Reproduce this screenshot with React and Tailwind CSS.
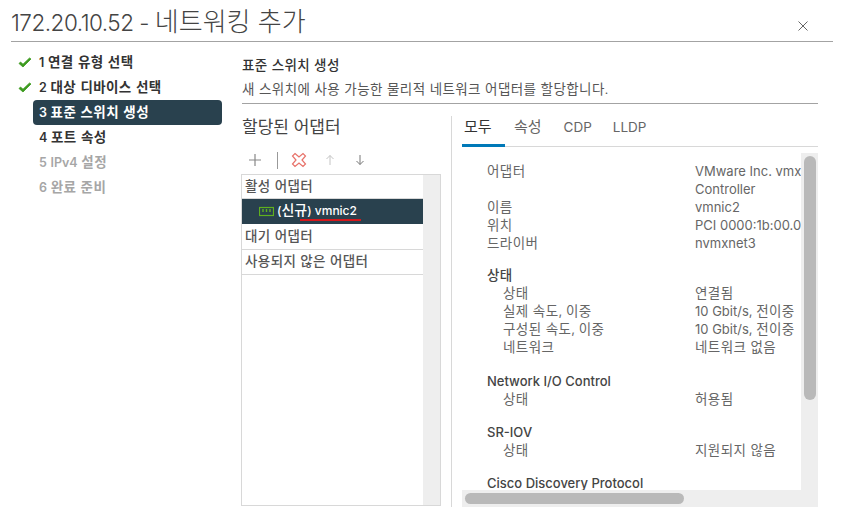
import React from "react";

const font = { fontFamily: '"Inter","Noto Sans CJK KR",sans-serif' };

function T({ children }) {
  if (!children) return null;
  const parts = String(children).split(/([\uAC00-\uD7A3]+(?: [\uAC00-\uD7A3]+)*)/);
  return (
    <>
      {parts.map((p, i) =>
        i % 2 === 1 ? (
          <span key={i} className="text-[13.5px] tracking-[0.4px]">{p}</span>
        ) : (
          <span key={i}>{p}</span>
        )
      )}
    </>
  );
}

function Check() {
  return (
    <svg width="14" height="12" viewBox="0 0 14 12" className="shrink-0">
      <path d="M1 6.5 L5 10 L13 2 L11.5 1 L5 7.2 L2.5 5 Z" fill="#3c9a1e" stroke="#3c9a1e" strokeWidth="0.8" />
    </svg>
  );
}

function Step({ n, state, check }) {
  const cls =
    state === "active"
      ? "bg-[#29414e] text-white rounded-[4px]"
      : state === "off"
      ? "text-[#a6a6a6]"
      : "text-[#333333]";
  return (
    <div className="flex items-center h-[25px]">
      <div className="w-[33px] pl-[18px] flex items-center shrink-0">{check && <Check />}</div>
      <div className={`w-[189px] h-[25px] pl-[6px] flex items-center text-[12.5px] font-semibold whitespace-nowrap ${cls}`}>
        <div className="[word-spacing:0.5px]"><T>{n}</T></div>
      </div>
    </div>
  );
}

function Row({ label, value, value2, indent, bold }) {
  return (
    <div className="flex text-[13px] leading-[18px] text-[#666666] whitespace-nowrap">
      <div className={`w-[208px] shrink-0 ${indent ? "pl-[16px]" : ""} ${bold ? "font-medium text-[#444444]" : ""}`}><T>{label}</T></div>
      {value && (
        <div>
          <T>{value}</T>
          {value2 && <div><T>{value2}</T></div>}
        </div>
      )}
    </div>
  );
}

function ListRow({ children, h }) {
  return (
    <div className={`${h} pl-[3px] flex items-center border-b border-[#d8d8d8] text-[12px] font-medium text-[#565656] whitespace-nowrap`}>
      <div><T>{children}</T></div>
    </div>
  );
}

export default function App() {
  return (
    <div className="w-[848px] h-[508px] bg-white overflow-hidden flex flex-col" style={font}>
      <div className="h-[42px] ml-[11px] w-[822px] border-b border-[#a3a3a3] flex items-start justify-between shrink-0">
        <div className="text-[22.5px] tracking-[-0.5px] leading-[28px] mt-[8px] text-[#444444] font-light whitespace-nowrap">
          172.20.10.52 - <span className="text-[26px] tracking-normal">네트워킹 추가</span>
        </div>
        <svg width="12" height="12" viewBox="0 0 12 12" className="mt-[20px] mr-[24px]">
          <path d="M1.5 1.5 L10.5 10.5 M10.5 1.5 L1.5 10.5" stroke="#666666" strokeWidth="1" />
        </svg>
      </div>
      <div className="flex flex-1 min-h-0">
        <div className="w-[242px] shrink-0 pt-[8px]">
          <Step n="1 연결 유형 선택" check />
          <Step n="2 대상 디바이스 선택" check />
          <Step n="3 표준 스위치 생성" state="active" />
          <Step n="4 포트 속성" />
          <Step n="5 IPv4 설정" state="off" />
          <Step n="6 완료 준비" state="off" />
        </div>
        <div className="w-[576px] flex flex-col min-h-0">
          <div className="h-[62px] border-b border-[#a3a3a3] shrink-0 pt-[14px] whitespace-nowrap">
            <div className="text-[12px] leading-[18px] font-medium text-[#333333]"><T>표준 스위치 생성</T></div>
            <div className="text-[12px] leading-[18px] mt-[5px] text-[#565656]"><T>새 스위치에 사용 가능한 물리적 네트워크 어댑터를 할당합니다.</T></div>
          </div>
          <div className="flex flex-1 min-h-0">
            <div className="w-[209px] shrink-0 -ml-[1px] flex flex-col">
              <div className="text-[17px] leading-[22px] mt-[12px] ml-[1px] text-[#444444]">할당된 어댑터</div>
              <div className="h-[36px] flex items-center pt-[8px] shrink-0">
                <svg width="14" height="14" viewBox="0 0 14 14" className="ml-[7px]">
                  <path d="M7 1 V13 M1 7 H13" stroke="#888888" strokeWidth="1.2" />
                </svg>
                <div className="w-px h-[17px] bg-[#999999] ml-[15px]" />
                <svg width="16" height="16" viewBox="0 0 16 16" className="ml-[13px]">
                  <path d="M4 1.5 L8 5 L12 1.5 L14.5 4 L11 8 L14.5 12 L12 14.5 L8 11 L4 14.5 L1.5 12 L5 8 L1.5 4 Z" fill="none" stroke="#e8726a" strokeWidth="1.2" />
                </svg>
                <svg width="10" height="12" viewBox="0 0 10 12" className="ml-[18px]">
                  <path d="M5 11 V1.5 M1.5 5 L5 1.5 L8.5 5" fill="none" stroke="#c4c4c4" strokeWidth="1" />
                </svg>
                <svg width="10" height="12" viewBox="0 0 10 12" className="ml-[20px]">
                  <path d="M5 1 V10.5 M1.5 7 L5 10.5 L8.5 7" fill="none" stroke="#777777" strokeWidth="1" />
                </svg>
              </div>
              <div className="w-[200px] h-[332px] border border-[#d8d8d8] flex">
                <div className="w-[181px] shrink-0">
                  <ListRow h="h-[24px]">활성 어댑터</ListRow>
                  <div className="h-[25px] bg-[#29414e] flex items-center pl-[17px] relative">
                    <svg width="15" height="11" viewBox="0 0 15 11" className="shrink-0">
                      <rect x="0.5" y="1.5" width="14" height="8" fill="none" stroke="#5fb01e" strokeWidth="1.2" />
                      <path d="M4 3 V6 M7.5 3 V6 M11 3 V6" stroke="#5fb01e" strokeWidth="1.4" />
                    </svg>
                    <span className="ml-[3px] text-[12px] leading-[20px] pb-[2px] font-medium text-white whitespace-nowrap">
                      (<span className="text-[14px]">신규</span>) vmnic2
                    </span>
                    <div className="absolute left-[58px] top-[20px] w-[61px] h-[2px] bg-[#d5171b]" />
                  </div>
                  <ListRow h="h-[26px]">대기 어댑터</ListRow>
                  <ListRow h="h-[25px] pb-[2px]">사용되지 않은 어댑터</ListRow>
                </div>
                <div className="flex-1 bg-[#eeeeee]" />
              </div>
            </div>
            <div className="flex-1 min-w-0 ml-[1px] mt-[12px] border-l border-[#d8d8d8] pl-[10px] flex flex-col h-[391px]">
              <div className="h-[31px] border-b border-[#d8d8d8] flex shrink-0 text-[13.5px] leading-[22px] text-[#666666]">
                <div className="w-[43px] h-[31px] border-b-[3px] border-[#0079b8] pl-[2px] text-[15px] text-[#333333]">모두</div>
                <div className="ml-[9px] text-[15px]">속성</div>
                <div className="ml-[22px]">CDP</div>
                <div className="ml-[21px]">LLDP</div>
              </div>
              <div className="flex-1 min-h-0 mt-[6px] flex flex-col">
                <div className="flex flex-1 min-h-0">
                  <div className="flex-1 min-w-0 overflow-hidden pl-[25px] pt-[9px]">
                    <Row label="어댑터" value="VMware Inc. vmxnet3" value2="Controller" />
                    <Row label="이름" value="vmnic2" />
                    <Row label="위치" value="PCI 0000:1b:00.0" />
                    <Row label="드라이버" value="nvmxnet3" />
                    <div className="h-[14px]" />
                    <Row label="상태" bold />
                    <Row label="상태" value="연결됨" indent />
                    <Row label="실제 속도, 이중" value="10 Gbit/s, 전이중" indent />
                    <Row label="구성된 속도, 이중" value="10 Gbit/s, 전이중" indent />
                    <Row label="네트워크" value="네트워크 없음" indent />
                    <div className="h-[16px]" />
                    <Row label="Network I/O Control" bold />
                    <Row label="상태" value="허용됨" indent />
                    <div className="h-[15px]" />
                    <Row label="SR-IOV" bold />
                    <Row label="상태" value="지원되지 않음" indent />
                    <div className="h-[15px]" />
                    <Row label="Cisco Discovery Protocol" bold />
                  </div>
                  <div className="w-[17px] shrink-0 bg-[#eeeeee] pt-[3px] flex justify-center">
                    <div className="w-[12px] h-[244px] rounded-[6px] bg-[#b9b9b9]" />
                  </div>
                </div>
                <div className="h-[17px] shrink-0 bg-[#eeeeee] pl-[3px] flex items-center">
                  <div className="w-[219px] h-[11px] rounded-[6px] bg-[#b9b9b9]" />
                </div>
              </div>
            </div>
          </div>
        </div>
      </div>
    </div>
  );
}
